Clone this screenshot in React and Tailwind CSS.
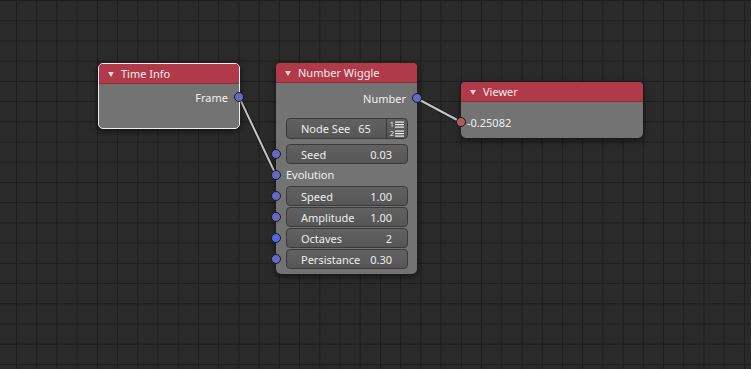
import React from "react";

const Socket = ({ color = "#6767c4", side = "left" }) => (
  <span
    className={`absolute top-1/2 -translate-y-1/2 w-[10px] h-[10px] rounded-full border border-[#1a1a1a] ${side === "left" ? "left-[-5px]" : "right-[-5px]"}`}
    style={{ backgroundColor: color }}
  />
);

const Header = ({ title }) => (
  <div className="h-[20px] flex items-center bg-[#b03a49] border-b border-[#8d2c39] rounded-t-[4px] pl-[9px] gap-[7px] text-[#f4eaec]">
    <svg width="6" height="5" viewBox="0 0 6 5" className="mt-[1px]">
      <polygon points="0,0 6,0 3,5" fill="#e9d3d6" />
    </svg>
    <span>{title}</span>
  </div>
);

const Field = ({ label, value }) => (
  <div className="h-[20px] flex-1 flex items-center justify-between rounded-[4px] border border-[#3a3a3a] bg-gradient-to-b from-[#616161] to-[#565656] pl-[14px] pr-[15px] text-[#ececec]">
    <span>{label}</span>
    <span>{value}</span>
  </div>
);

const InputRow = ({ label, value, color }) => (
  <div className="relative flex pl-[10px] pr-[9px]">
    <Socket color={color} />
    <Field label={label} value={value} />
  </div>
);

function ListIcon() {
  return (
    <div className="w-[21px] h-[19px] flex flex-col justify-center items-center gap-[1px] border-l border-[#3a3a3a] text-[7.5px] leading-[8px] text-[#f0f0f0]">
      {["1", "2"].map((n) => (
        <div key={n} className="h-[8px] flex items-center gap-[1px]">
          <span>{n}</span>
          <svg width="9" height="7" viewBox="0 0 9 7">
            <rect x="0" y="0.5" width="9" height="1.2" fill="#f0f0f0" />
            <rect x="0" y="3" width="9" height="1.2" fill="#f0f0f0" />
            <rect x="0" y="5.5" width="9" height="1.2" fill="#f0f0f0" />
          </svg>
        </div>
      ))}
    </div>
  );
}

export default function App() {
  return (
    <div
      className="relative w-[751px] h-[369px] overflow-hidden bg-[#2a2a2a] text-[11px] leading-none bg-[linear-gradient(to_right,#1d1d1d_1px,transparent_1px),linear-gradient(to_bottom,#1d1d1d_1px,transparent_1px)] bg-[size:20.22px_20.22px] bg-[position:16px_0px]"
      style={{ fontFamily: '"Noto Sans", "Open Sans", sans-serif' }}
    >
      <svg className="absolute inset-0" width="751" height="369">
        <line x1="239" y1="97" x2="276" y2="175" stroke="#1a1a1a" strokeWidth="4" />
        <line x1="239" y1="97" x2="276" y2="175" stroke="#c4c4c4" strokeWidth="2" />
        <line x1="416" y1="98" x2="461" y2="122" stroke="#1a1a1a" strokeWidth="4" />
        <line x1="416" y1="98" x2="461" y2="122" stroke="#c4c4c4" strokeWidth="2" />
      </svg>

      {/* Time Info */}
      <div className="absolute left-[98px] top-[63px] w-[142px] h-[66px] rounded-[5px] border border-[#ececec] bg-[#737373] shadow-[0_2px_6px_rgba(0,0,0,0.6)]">
        <Header title="Time Info" />
        <div className="pt-[3px]">
          <div className="relative h-[20px] flex items-center justify-end pr-[11px] text-[#f0f0f0]">
            Frame
            <Socket side="right" />
          </div>
        </div>
      </div>

      {/* Number Wiggle */}
      <div className="absolute left-[276px] top-[63px] w-[141px] h-[211px] rounded-[5px] bg-[#737373] shadow-[0_2px_6px_rgba(0,0,0,0.6)] flex flex-col">
        <Header title="Number Wiggle" />
        <div className="pt-[5px] flex flex-col">
          <div className="relative h-[20px] flex items-center justify-end pr-[11px] text-[#f0f0f0]">
            Number
            <Socket side="right" />
          </div>
          <div className="mt-[10px] flex pl-[10px] pr-[9px]">
            <div className="flex-1 h-[21px] flex items-center rounded-[4px] border border-[#3a3a3a] bg-gradient-to-b from-[#616161] to-[#565656] text-[#ececec]">
              <span className="pl-[14px]">Node See</span>
              <span className="pl-[8px] flex-1">65</span>
              <ListIcon />
            </div>
          </div>
          <div className="mt-[5px]">
            <InputRow label="Seed" value="0.03" />
          </div>
          <div className="relative h-[21px] flex items-center pl-[10px] text-[#f0f0f0]">
            <Socket />
            Evolution
          </div>
          <div className="mt-[1px] flex flex-col gap-[1px]">
            <InputRow label="Speed" value="1.00" />
            <InputRow label="Amplitude" value="1.00" />
            <InputRow label="Octaves" value="2" color="#5266e6" />
            <InputRow label="Persistance" value="0.30" />
          </div>
        </div>
      </div>

      {/* Viewer */}
      <div className="absolute left-[461px] top-[82px] w-[182px] h-[56px] rounded-[5px] bg-[#737373] shadow-[0_2px_6px_rgba(0,0,0,0.6)]">
        <Header title="Viewer" />
        <div className="pt-[10px]">
          <div className="relative h-[20px] flex items-center pl-[6px] text-[#f0f0f0]">
            <Socket color="#b05a5a" />
            -0.25082
          </div>
        </div>
      </div>
    </div>
  );
}
